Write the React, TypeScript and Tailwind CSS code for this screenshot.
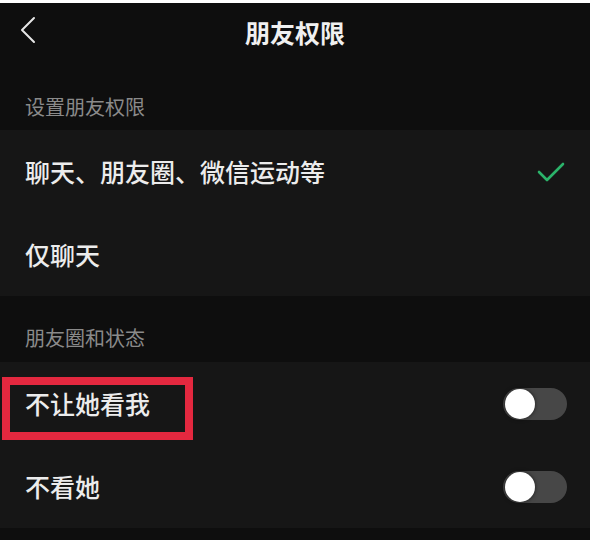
const font = { fontFamily: '"Noto Sans CJK SC", "Noto Sans", sans-serif' };

function Toggle() {
    return (
        <div className="w-[64px] h-[32px] rounded-full bg-[#474747] flex items-center pl-[2px]">
            <div className="w-[30px] h-[30px] rounded-full bg-white shadow-[0_0_4px_rgba(0,0,0,0.6)]" />
        </div>
    );
}

function Row({ label, right, boxed }: { label: string; right?: React.ReactNode; boxed?: boolean }) {
    return (
        <div className="relative h-[83px] flex items-center justify-between pl-[25px] pr-[23px]">
            <span className="text-[25px] font-medium text-[#ececec]">{label}</span>
            {right}
            {boxed && (
                <div className="absolute left-[2px] top-[15px] w-[191px] h-[63px] border-[8px] border-[#e4283f]" />
            )}
        </div>
    );
}

function App() {
    return (
        <div className="w-[590px] h-[540px] bg-[#0e0e0e] overflow-hidden" style={font}>
            <div className="h-[3px] bg-white" />
            {/* title bar */}
            <div className="relative h-[60px] flex items-center justify-center">
                <svg width="18" height="28" viewBox="0 0 18 28" className="absolute left-[19px] top-[13px]">
                    <path d="M15 2 L3 14 L15 26" fill="none" stroke="#e6e6e6" strokeWidth="2" strokeLinecap="round" strokeLinejoin="round" />
                </svg>
                <span className="text-[25px] font-bold text-[#f0f0f0]">朋友权限</span>
            </div>

            <div className="h-[67px] flex items-end pl-[25px] pb-[8px]">
                <span className="text-[20px] text-[#8a8a8a]">设置朋友权限</span>
            </div>
            <div className="bg-[#161616]">
                <Row
                    label="聊天、朋友圈、微信运动等"
                    right={
                        <svg width="28" height="22" viewBox="0 0 28 22" className="mr-[2px]">
                            <path d="M2 11 L10 19 L26 3" fill="none" stroke="#2bb36a" strokeWidth="2.6" strokeLinecap="round" strokeLinejoin="round" />
                        </svg>
                    }
                />
                <Row label="仅聊天" />
            </div>

            <div className="h-[66px] flex items-end pl-[25px] pb-[9px]">
                <span className="text-[20px] text-[#8a8a8a]">朋友圈和状态</span>
            </div>
            <div className="bg-[#161616]">
                <Row label="不让她看我" right={<Toggle />} boxed />
                <Row label="不看她" right={<Toggle />} />
            </div>
        </div>
    );
}

export default App;
